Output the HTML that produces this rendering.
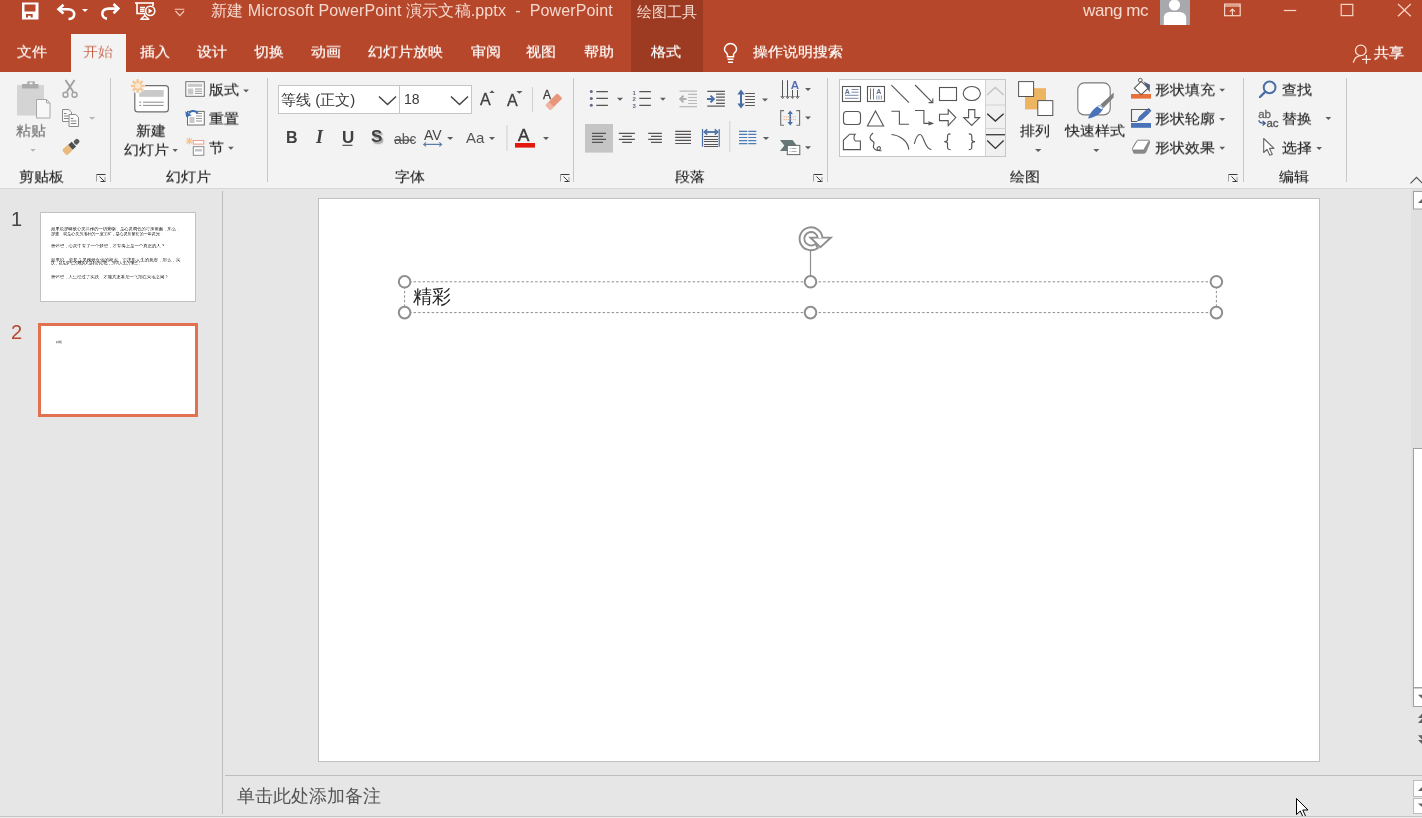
<!DOCTYPE html>
<html><head><meta charset="utf-8">
<style>
*{box-sizing:border-box;margin:0;padding:0}
html,body{width:1422px;height:818px;overflow:hidden;background:#E5E6E5;font-family:"Liberation Sans",sans-serif;}
.a{position:absolute;white-space:nowrap;will-change:transform}
#title{left:0;top:0;width:1422px;height:72px;background:#B7472A}
.wt{color:#FFFFFF;font-size:15px;line-height:15px;-webkit-text-stroke:0.2px #FFFFFF;transform:scaleY(0.92);transform-origin:50% 45%}
.tt{color:#F6D9CF;font-size:15px;line-height:15px}
#ribbon{left:0;top:72px;width:1422px;height:117px;background:#F3F3F3;border-bottom:1px solid #D6D6D6}
.rt{color:#262626;font-size:15px;line-height:15px;-webkit-text-stroke:0.15px #262626;transform:scaleY(0.92);transform-origin:50% 45%}
.gl{color:#262626;font-size:15px;line-height:15px;-webkit-text-stroke:0.15px #262626;transform:scaleY(0.92);transform-origin:50% 45%}
.sep{position:absolute;width:1px;background:#C8C8C8}
svg{position:absolute;overflow:visible}
</style></head><body>
<div id="title" class="a"></div>
<!-- contextual tab -->
<div class="a" style="left:631px;top:0;width:72px;height:72px;background:#9C3B22"></div>
<div class="a tt" style="left:637px;top:4px">绘图工具</div>
<div class="a tt" style="left:211px;top:3px;font-size:16px;line-height:16px;letter-spacing:0.13px">新建 Microsoft PowerPoint 演示文稿.pptx&nbsp; -&nbsp; PowerPoint</div>
<div class="a tt" style="left:1083px;top:2px;font-size:17px;line-height:17px;letter-spacing:-0.4px">wang mc</div>


<!-- QAT icons -->
<svg style="left:0;top:0" width="1422" height="72">
 <g fill="none" stroke="#FFFFFF">
  <!-- save -->
  <rect x="23" y="3.5" width="14.5" height="15" stroke-width="2"/>
 </g>
 <rect x="22" y="3" width="16" height="16" fill="#FFF"/>
 <rect x="24.5" y="4.5" width="11" height="7" fill="#B7472A"/>
 <path d="M26 14h6.7v3.4h-2v-1.6h-2.7v1.6h-2z" fill="#B7472A"/>
 <!-- undo -->
 <g fill="none" stroke="#FFFFFF" stroke-width="2.6" stroke-linejoin="miter" stroke-linecap="butt">
  <path d="M63.5 4.8 L58.5 9.3 L63.5 13.6"/>
  <path d="M58.5 9.3 H68 C72 9.3 74.2 11.6 74.2 14.3 C74.2 17 72 19 68.5 19"/>
  <path d="M113.5 4 L118.3 8.6 L113.5 13.2"/>
  <path d="M118.3 8.6 H108.8 C104.5 8.6 102.3 10.9 102.3 13.6 C102.3 16.4 104.3 18.4 107 18.6"/>
 </g>
 <path d="M82 9h6l-3 3z" fill="#FFF"/>
 <!-- present -->
 <g fill="none" stroke="#FFFFFF" stroke-width="1.6">
  <path d="M135 3H154"/>
  <path d="M137 3V13.5H145"/>
  <path d="M153 3V6"/>
  <path d="M140 7.5H145M140 9.5H144.5M140 11.3H144.5" stroke-width="1.3"/>
  <circle cx="150.2" cy="10.9" r="4.6"/>
 </g>
 <path d="M148.5 8.3v5.2l4-2.6z" fill="#FFF"/>
 <path d="M144.8 13.5V15.2M144.8 15.5L140.8 19.2H148.8Z" fill="none" stroke="#FFF" stroke-width="1.4" stroke-linejoin="round"/>
 <path d="M174.8 9.3h9.5M175.5 11l4.3 4.6l4.3-4.6" fill="none" stroke="#F4CDBE" stroke-width="1.1"/>
 <!-- right window buttons -->
 <g fill="none" stroke="#F9D5C6" stroke-width="1.2">
  <rect x="1224.6" y="4.1" width="15.6" height="11.6"/>
  <path d="M1224.6 6H1240.2"/>
  <path d="M1232.4 15.7V9.3M1229.8 11.6L1232.4 9L1235 11.6"/>
  <path d="M1283.8 10.5H1296.2"/>
  <rect x="1341.2" y="4.4" width="11.6" height="11.2"/>
  <path d="M1398 4L1410.8 16.2M1410.8 4L1398 16.2"/>
 </g>
 <!-- avatar -->
 <rect x="1160" y="0" width="30" height="25" fill="#A7A9AC"/>
 <circle cx="1174.5" cy="5" r="5.6" fill="#FFF"/>
 <path d="M1163.8 25V18C1163.8 14 1166.5 12 1170 12H1179C1182.8 12 1186.2 14 1186.2 18V25Z" fill="#FFF"/>
 <!-- lightbulb -->
 <g fill="none" stroke="#FFFFFF" stroke-width="1.5">
  <path d="M727.5 56.8V55C727.5 53 724.5 52 724.5 49.5A6 6 0 0 1 736.5 49.5C736.5 52 733.5 53 733.5 55V56.8Z"/>
  <path d="M727.5 59.3H733.5M728 62.2H733"/>
 </g>
 <!-- share -->
 <g fill="none" stroke="#FBE3D8" stroke-width="1.3">
  <circle cx="1360.8" cy="50.4" r="5.3"/>
  <path d="M1353.3 62.6C1354.3 58.8 1357 56 1360.8 55.7"/>
  <path d="M1366.4 55V63.8M1362 59.4H1370.8"/>
 </g>
</svg>

<!-- tabs -->
<div class="a" style="left:71px;top:34px;width:55px;height:40px;background:#F3F3F3"></div>
<div class="a wt" style="left:17px;top:44px">文件</div>
<div class="a wt" style="left:83px;top:44px;color:#B7472A">开始</div>
<div class="a wt" style="left:140px;top:44px">插入</div>
<div class="a wt" style="left:197px;top:44px">设计</div>
<div class="a wt" style="left:254px;top:44px">切换</div>
<div class="a wt" style="left:311px;top:44px">动画</div>
<div class="a wt" style="left:368px;top:44px">幻灯片放映</div>
<div class="a wt" style="left:471px;top:44px">审阅</div>
<div class="a wt" style="left:526px;top:44px">视图</div>
<div class="a wt" style="left:584px;top:44px">帮助</div>
<div class="a wt" style="left:651px;top:44px">格式</div>
<div class="a wt" style="left:753px;top:44px">操作说明搜索</div>
<div class="a wt" style="left:1374px;top:45px;font-size:15px;-webkit-text-stroke:0.25px #fff">共享</div>

<!-- ribbon -->
<div id="ribbon" class="a"></div>
<div class="sep" style="left:110px;top:78px;height:104px"></div>
<div class="sep" style="left:267px;top:78px;height:104px"></div>
<div class="sep" style="left:573px;top:78px;height:104px"></div>
<div class="sep" style="left:827px;top:78px;height:104px"></div>
<div class="sep" style="left:1243px;top:78px;height:104px"></div>
<div class="sep" style="left:1346px;top:78px;height:104px"></div>


<!-- clipboard group -->
<svg style="left:0;top:0" width="1422" height="188">
 <rect x="17" y="85" width="27" height="30.5" fill="#D4D4D4"/>
 <rect x="22" y="84" width="16.5" height="4.5" fill="#ABABAB"/>
 <rect x="27.3" y="81.3" width="7.5" height="3.5" fill="#ABABAB"/>
 <rect x="29.5" y="82.3" width="3" height="2" fill="#F3F3F3"/>
 <path d="M36.5 99.5H46.5L50 103V118H36.5Z" fill="#F7F7F7" stroke="#A8A8A8" stroke-width="1"/>
 <path d="M46.5 99.5V103H50" fill="none" stroke="#A8A8A8" stroke-width="1"/>
 <path d="M30.3 149h5.3l-2.65 2.8z" fill="#B5B5B5"/>
 <!-- scissors -->
 <g fill="none" stroke="#A0A0A0">
  <path d="M65.5 80L73.2 91.8M74.5 80L66.8 91.8" stroke-width="1.9"/>
  <circle cx="65.5" cy="94.8" r="2.5" stroke-width="1.4"/>
  <circle cx="74.5" cy="94.8" r="2.5" stroke-width="1.4"/>
 </g>
 <!-- copy -->
 <g fill="#F9F9F9" stroke="#8A8A8A" stroke-width="1">
  <path d="M62.5 109.5H68.8L71.5 112.2V121.5H62.5Z"/>
  <path d="M69 114.5H75.8L78.5 117.2V126.5H69Z"/>
 </g>
 <path d="M64 113.5h2.5M64 116h4.5M64 118.5h4.5M70.8 118.5h2.5M70.8 121h5.5M70.8 123.5h5.5" stroke="#777" stroke-width="0.9"/>
 <path d="M89 117h6.2l-3.1 2.8z" fill="#B5B5B5"/>
 <!-- format painter -->
 <g transform="translate(64.3,152.8) rotate(-42)">
  <rect x="0" y="-3.8" width="8.5" height="7.6" rx="2" fill="#EAB97C"/>
  <rect x="8.3" y="-3.3" width="4.6" height="6.6" fill="#4E4E4E"/>
  <rect x="13.8" y="-2.4" width="5.5" height="4.8" rx="1.8" fill="#5A5A5A"/>
 </g>
<g transform="translate(0,0)" fill="none" stroke-width="1"><path d="M96.5 174.5H105.5M100.5 181.5H105.5M99.5 176.5L104.5 181.5" stroke="#3A3A3A"/><path d="M96.5 174.5V181.5M105 177V181.5" stroke="#A0A0A0"/></g>

 <!-- new slide -->
 <rect x="134.8" y="85.7" width="33.6" height="26.2" rx="3" fill="#FFF" stroke="#6E6E6E" stroke-width="1.2"/>
 <rect x="139.2" y="90" width="24.5" height="6.8" fill="#C9C9C9"/>
 <path d="M139.2 102.2h2M143 102.2h20.7M139.2 105.4h2M143 105.4h20.7" stroke="#8C8C8C" stroke-width="1"/>
 <circle cx="137.7" cy="85.8" r="7.5" fill="#F3F3F3"/>
 <path d="M140.20 87.20L144.60 86.92L144.60 84.68L140.20 84.40ZM138.48 88.56L141.79 91.47L143.37 89.89L140.46 86.58ZM136.30 88.30L136.58 92.70L138.82 92.70L139.10 88.30ZM134.94 86.58L132.03 89.89L133.61 91.47L136.92 88.56ZM135.20 84.40L130.80 84.68L130.80 86.92L135.20 87.20ZM136.92 83.04L133.61 80.13L132.03 81.71L134.94 85.02ZM139.10 83.30L138.82 78.90L136.58 78.90L136.30 83.30ZM140.46 85.02L143.37 81.71L141.79 80.13L138.48 83.04Z" fill="#F4C796"/>
 <circle cx="137.7" cy="85.8" r="2.9" fill="#FCE7D0"/>
 <path d="M172.5 149h5.3l-2.65 3z" fill="#5E5E5E"/>
 <!-- layout -->
 <rect x="185.8" y="81.7" width="18.5" height="14.6" fill="#FFF" stroke="#6E6E6E" stroke-width="1"/>
 <rect x="187.8" y="83.7" width="14.5" height="3.2" fill="#C9C9C9"/>
 <rect x="187.8" y="88.5" width="5.5" height="6" fill="#C9C9C9"/>
 <path d="M195 89h7M195 91.2h7M195 93.4h7" stroke="#8A8A8A" stroke-width="0.9"/>
 <path d="M243.2 89.6h5.7l-2.85 2.8z" fill="#5E5E5E"/>
 <!-- reset -->
 <rect x="187.5" y="111.4" width="16.8" height="13.6" fill="#FFF" stroke="#6E6E6E" stroke-width="1"/>
 <rect x="189.5" y="117" width="5" height="6" fill="#C9C9C9"/>
 <path d="M196 113.5h6M196 116h6M196 118.5h6M196 121h6" stroke="#8A8A8A" stroke-width="0.9"/>
 <path d="M189 113.5C190 110.8 195.5 109.5 197.5 113.2" fill="none" stroke="#3E6DB5" stroke-width="2"/>
 <path d="M185.2 111.2L186.2 117.3L191.7 115.2Z" fill="#3E6DB5"/>
 <!-- section -->
 <g stroke="#F3C394" stroke-width="1.1">
  <path d="M189.4 137.4v7.2M185.8 141h7.2M186.8 138.4l5.2 5.2M192 138.4l-5.2 5.2"/>
 </g>
 <rect x="193.3" y="140.5" width="10.5" height="3.6" fill="#FFF" stroke="#E8A08A" stroke-width="1"/>
 <rect x="193.3" y="146.7" width="10.5" height="8.6" fill="#FFF" stroke="#8A8A8A" stroke-width="1"/>
 <rect x="195" y="149" width="7" height="2.5" fill="#C4C4C4"/>
 <path d="M228 146.7h5.8l-2.9 3z" fill="#5E5E5E"/>
 <!-- group launchers -->
<g transform="translate(464,0)" fill="none" stroke-width="1"><path d="M96.5 174.5H105.5M100.5 181.5H105.5M99.5 176.5L104.5 181.5" stroke="#3A3A3A"/><path d="M96.5 174.5V181.5M105 177V181.5" stroke="#A0A0A0"/></g>
<g transform="translate(717,0)" fill="none" stroke-width="1"><path d="M96.5 174.5H105.5M100.5 181.5H105.5M99.5 176.5L104.5 181.5" stroke="#3A3A3A"/><path d="M96.5 174.5V181.5M105 177V181.5" stroke="#A0A0A0"/></g>
<g transform="translate(1132,0)" fill="none" stroke-width="1"><path d="M96.5 174.5H105.5M100.5 181.5H105.5M99.5 176.5L104.5 181.5" stroke="#3A3A3A"/><path d="M96.5 174.5V181.5M105 177V181.5" stroke="#A0A0A0"/></g>

 <path d="M1410.5 183.3l6-6l6 6" fill="none" stroke="#555" stroke-width="1.2"/>
</svg>
<div class="a rt" style="left:16px;top:123px;color:#8A8A8A">粘贴</div>
<div class="a rt" style="left:136px;top:123px">新建</div>
<div class="a rt" style="left:124px;top:142px">幻灯片</div>
<div class="a rt" style="left:209px;top:82px">版式</div>
<div class="a rt" style="left:209px;top:111px">重置</div>
<div class="a rt" style="left:209px;top:140px">节</div>

<div class="a gl" style="left:19px;top:169px">剪贴板</div>
<div class="a gl" style="left:166px;top:169px">幻灯片</div>

<!-- font group -->
<div class="a" style="left:278px;top:85px;width:194px;height:29px;background:#FFF;border:1px solid #C6C6C6"></div>
<div class="a" style="left:399px;top:85px;width:1px;height:29px;background:#C6C6C6"></div>
<div class="a" style="left:281px;top:92px;font-size:15px;line-height:15px;color:#3A3A3A">等线 (正文)</div>
<div class="a" style="left:404px;top:92px;font-size:14px;line-height:14px;color:#3A3A3A">18</div>
<svg style="left:0;top:0" width="1422" height="188">
 <path d="M379 96.5l8.5 8l8.5-8M451 96.5l8.5 8l8.5-8" fill="none" stroke="#444" stroke-width="1.5"/>
 <path d="M489.3 93.1l2.7-2.8l2.7 2.8z" fill="#5A5A5A"/>
 <path d="M516.2 90.9h6.4l-3.2 2.8z" fill="#5A5A5A"/>
 <rect x="532" y="87" width="1" height="25" fill="#D0D0D0"/>
 <g transform="translate(553.8,101.8) rotate(-45)"><rect x="-8.5" y="-3.6" width="17" height="7.2" rx="1.2" fill="#E8957A"/><rect x="-8.5" y="-3.6" width="5" height="7.2" rx="1.2" fill="#F0B5A2"/></g>
 
 <rect x="506.5" y="125" width="1" height="26" fill="#D0D0D0"/>
 <rect x="515" y="143" width="20" height="4.6" fill="#E2180F"/>
 <path d="M424 144.4h17.3" stroke="#5B7BA8" stroke-width="1.2"/>
 <path d="M426 142.4l-2.3 2l2.3 2M439.3 142.4l2.3 2l-2.3 2" fill="none" stroke="#5B7BA8" stroke-width="1.1"/>
 <path d="M447.1 137h6.1l-3.05 3z M489 137h6l-3 3z M543 137h6l-3 3z" fill="#5E5E5E"/>
 <path d="M394 140.2h20.3" stroke="#444" stroke-width="1.2"/>
 <path d="M342.5 145.3h10" stroke="#444" stroke-width="1.1"/>
</svg>
<div class="a" style="left:480px;top:92px;font-size:16px;line-height:16px;color:#404040;-webkit-text-stroke:0.3px #404040">A</div>
<div class="a" style="left:507px;top:93px;font-size:16px;line-height:16px;color:#404040;-webkit-text-stroke:0.3px #404040">A</div>
<div class="a" style="left:543px;top:89px;font-size:12px;line-height:12px;color:#3A3A3A;-webkit-text-stroke:0.3px #3A3A3A">A</div>
<div class="a" style="left:286px;top:130px;font-size:16px;line-height:16px;font-weight:bold;color:#404040">B</div>
<div class="a" style="left:316px;top:129px;font-size:18px;line-height:17px;font-weight:bold;font-style:italic;font-family:'Liberation Serif',serif;color:#404040">I</div>
<div class="a" style="left:342px;top:129px;font-size:17px;line-height:17px;font-weight:bold;color:#404040">U</div>
<div class="a" style="left:371px;top:128px;font-size:17px;line-height:17px;font-weight:bold;color:#404040;text-shadow:1.5px 1.5px 1.5px #999">S</div>
<div class="a" style="left:394px;top:132px;font-size:14px;line-height:14px;color:#555">abc</div>
<div class="a" style="left:424px;top:128px;font-size:14px;line-height:14px;color:#444">AV</div>
<div class="a" style="left:466px;top:130px;font-size:15px;line-height:15px;color:#555">Aa</div>
<div class="a" style="left:518px;top:127px;font-size:17px;line-height:17px;color:#3A3A3A;-webkit-text-stroke:0.5px #3A3A3A">A</div>

<div class="a gl" style="left:395px;top:169px">字体</div>

<!-- paragraph group -->
<svg style="left:0;top:0" width="1422" height="188">
 <g fill="#5F6B85"><circle cx="591.3" cy="91.6" r="1.5"/><circle cx="591.3" cy="98.4" r="1.5"/><circle cx="591.3" cy="105.3" r="1.5"/></g>
 <path d="M596.3 91.6h11.6M596.3 98.4h11.6M596.3 105.3h11.6M639.3 91.6h11.6M639.3 98.4h11.6M639.3 105.3h11.6" stroke="#555" stroke-width="1.3"/>
 <text x="632.5" y="94.5" font-size="6" font-family="Liberation Sans" font-weight="bold" fill="#5F6B85">1</text>
 <text x="632.5" y="101.3" font-size="6" font-family="Liberation Sans" font-weight="bold" fill="#5F6B85">2</text>
 <text x="632.5" y="108.2" font-size="6" font-family="Liberation Sans" font-weight="bold" fill="#5F6B85">3</text>
 <path d="M616.9 97.8h6.2l-3.1 3z M660 97.8h5.8l-2.9 3z M762 98.4h6l-3 3z M805 88h6l-3 3z M805 116.6h6l-3 3z M805 146.2h6l-3 3z M762.9 137.1h6.2l-3.1 3z" fill="#5E5E5E"/>
 <!-- decrease indent -->
 <path d="M679.5 91.2h17.5M679.5 106.6h17.5M688.2 94.4h8.8M688.2 97.5h8.8M688.2 100.5h8.8M688.2 103.5h8.8" stroke="#B9B9B9" stroke-width="1.2"/>
 <path d="M680 99h6.5M683.5 95.8l-3.3 3.2l3.3 3.2" fill="none" stroke="#B0B0B0" stroke-width="2"/>
 <!-- increase indent -->
 <path d="M707.3 91.4h17.6M707.3 106.2h17.6M716.1 94.2h8.8M716.1 97.2h8.8M716.1 100.2h8.8M716.1 103.4h8.8" stroke="#5A5A5A" stroke-width="1.2"/>
 <path d="M707 98.9h6M710.5 95.6l3.3 3.3l-3.3 3.3" fill="none" stroke="#4A6FA5" stroke-width="2"/>
 <!-- line spacing -->
 <path d="M741 92v13.5" stroke="#4A6FA5" stroke-width="2"/>
 <path d="M737.3 94.5l3.7-5l3.7 5zM737.3 103.5l3.7 5l3.7-5z" fill="#4A6FA5"/>
 <path d="M745.2 93.5h9.7M745.2 96.5h9.7M745.2 99.5h9.7M745.2 102.5h9.7M745.2 105.5h9.7" stroke="#5E5852" stroke-width="1"/>
 <!-- text direction -->
 <path d="M782.5 80.2v17M787.5 80.2v17M792.5 90v7.2M797.5 90v7.2" stroke="#555" stroke-width="1"/>
 <path d="M780.8 96l1.8 2.5l1.8-2.5M785.8 96l1.8 2.5l1.8-2.5M790.7 96l1.8 2.5l1.8-2.5M795.7 96l1.8 2.5l1.8-2.5" fill="none" stroke="#555" stroke-width="1"/>
 <text x="790.8" y="88.6" font-size="11.5" font-family="Liberation Sans" font-weight="bold" fill="#5470B5">A</text>
 <!-- align text -->
 <path d="M784 110.6h-3.3v14.6h3.3M796.3 110.6h3.3v14.6h-3.3" fill="none" stroke="#707070" stroke-width="1.1"/>
 <path d="M790.2 112v12" stroke="#4A6FA5" stroke-width="1.6"/>
 <path d="M787.5 114l2.7-3.4l2.7 3.4zM787.5 122l2.7 3.6l2.7-3.6z" fill="#4A6FA5"/>
 <path d="M783.5 116.8h12.5M783.5 119.6h12.5" stroke="#E7A77C" stroke-width="0.8" stroke-dasharray="1.5 0.8"/>
 <!-- smartart -->
 <path d="M780 140h12.5l4.3 5.4l-4.3 5.5H780l4.3-5.5z" fill="#667777"/>
 <rect x="787.3" y="145.4" width="12.5" height="9.2" fill="#FFF" stroke="#666" stroke-width="1"/>
 <path d="M789.5 148.5h1M791.5 148.5h5M789.5 151.5h1M791.5 151.5h5" stroke="#888" stroke-width="0.7"/>
 <!-- align row -->
 <rect x="585" y="124" width="28" height="28.6" fill="#C5C5C5"/>
 <path d="M592 133.4h14M592 136.4h11M592 139.4h14M592 142.4h11" stroke="#555" stroke-width="1.2"/>
 <path d="M618.8 133.4h16.1M622.2 136.4h9.7M618.8 139.4h16.1M622.2 142.4h9.7" stroke="#555" stroke-width="1.2"/>
 <path d="M648.2 133.4h13.7M651 136.4h10.9M648.2 139.4h13.7M651 142.4h10.9" stroke="#555" stroke-width="1.2"/>
 <path d="M675.2 131.3h15.8M675.2 134.4h15.8M675.2 137.4h15.8M675.2 140.4h15.8M675.2 143.5h15.8" stroke="#555" stroke-width="1.2"/>
 <!-- distributed -->
 <path d="M702.5 129v17.7M719.2 129v17.7" stroke="#4A6FA5" stroke-width="1.2"/>
 <path d="M705.5 132h11" stroke="#4A6FA5" stroke-width="1.8"/>
 <path d="M707.3 129.3l-3 2.7l3 2.7M714.7 129.3l3 2.7l-3 2.7" fill="none" stroke="#4A6FA5" stroke-width="1.6"/>
 <path d="M704 136.5h14M704 139h14M704 141.5h14M704 144h14M704 146.5h14" stroke="#555" stroke-width="1" shape-rendering="crispEdges"/>
 <rect x="729.3" y="121" width="1" height="31" fill="#D0D0D0"/>
 <!-- columns -->
 <path d="M739 131.3h8.3M739 134.4h8.3M739 137.5h8.3M739 140.6h8.3M739 143.6h8.3M748.3 131.3h8M748.3 134.4h8M748.3 137.5h8M748.3 140.6h8M748.3 143.6h8" stroke="#4E7DB5" stroke-width="1.2"/>
</svg>

<div class="a gl" style="left:675px;top:169px">段落</div>

<!-- drawing group -->
<div class="a" style="left:839px;top:79px;width:167px;height:78px;background:#FFF;border:1px solid #C6C6C6"></div>
<div class="a" style="left:985px;top:80px;width:20px;height:76px;background:#F0F0F0;border-left:1px solid #D2D2D2"></div>
<svg style="left:0;top:0" width="1422" height="188">
 <path d="M985.5 105h20M985.5 128.5h20" stroke="#D2D2D2" stroke-width="1"/>
 <path d="M987 95l8.3-7.6l8.3 7.6" fill="none" stroke="#C2C2C2" stroke-width="1.3"/>
 <path d="M987.2 113.8l8.2 7.3l8.2-7.3" fill="none" stroke="#333" stroke-width="1.4"/>
 <path d="M986 134.7h19" stroke="#444" stroke-width="1.4"/>
 <path d="M987.2 140.6l8.2 7.8l8.2-7.8" fill="none" stroke="#333" stroke-width="1.4"/>
 <g fill="none" stroke="#555" stroke-width="1.1">
  <!-- row1 -->
  <rect x="842.5" y="86.5" width="18" height="15"/>
  <path d="M851.5 89.5h7M851.5 92.2h7M845 95.3h13.5M845 98.3h13.5" stroke="#7A8AA8" stroke-width="1"/>
  <rect x="867.5" y="86.5" width="17" height="15"/>
  <path d="M870.5 88.5v11M873.5 88.5v11" stroke="#777" stroke-width="1"/>
  <path d="M876.8 95.5v4M879 95.5v4M881.3 95.5v4" stroke="#7A8AA8" stroke-width="0.9"/>
  <path d="M891.4 85.2L908.9 102.7"/>
  <path d="M915.1 85L932.5 102.6"/>
  <rect x="939.5" y="87.5" width="17" height="13"/>
  <ellipse cx="971.8" cy="93.5" rx="8.6" ry="7"/>
  <!-- row2 -->
  <rect x="843.5" y="111.5" width="17" height="13" rx="3"/>
  <path d="M875.5 111L883.6 126H867.4Z"/>
  <path d="M891.4 111.2H899.4V124.3H908.9"/>
  <path d="M915 110.5H923.9V123.4H932.5"/>
  <path d="M939.5 114.2H948.2V109.6L955.8 117.6L948.2 125.6V120.6H939.5Z"/>
  <path d="M968.6 109.6H974.8V117.6H979.6L971.7 125.4L963.7 117.6H968.6Z"/>
  <!-- row3 -->
  <path d="M843.4 149.6V140.3L849.6 134.2H855.2C853.5 136 853.5 140 855.5 141H860.4V149.6Z"/>
  <path d="M873 133C869 136.5 869 139 872.5 141C876 143 872.5 145 873.5 147.5C874.5 150 878.5 151.5 880 149.5C881.5 147.5 879 145.5 877.5 147.5C876 149.5 879 151.5 881.5 150.5"/>
  <path d="M891.4 134.5C899 135 908.5 141 908.7 149.8"/>
  <path d="M914.3 143.8C915.5 139 917 134.5 920 134.5C924 134.5 924.5 149.5 931.5 149.5"/>
 </g>
 <path d="M928.6 102.6h4.2v-4.2M928.3 124.9l4.2-1.5l-4.2-1.7" fill="none" stroke="#555" stroke-width="1.1"/>
 <text x="844.8" y="94.3" font-size="7" font-family="Liberation Sans" font-weight="bold" fill="#5F6F90">A</text>
 <text x="876.3" y="94.3" font-size="7" font-family="Liberation Sans" font-weight="bold" fill="#5F6F90">A</text>
 
 <path d="M950.5 133.8C947.5 133.8 947.5 135 947.5 137.5V139.8C947.5 141 946.5 141.6 944.3 141.7C946.5 141.8 947.5 142.4 947.5 143.6V146C947.5 148.5 947.5 149.6 950.5 149.6M968.8 133.8C971.8 133.8 971.8 135 971.8 137.5V139.8C971.8 141 972.8 141.6 975 141.7C972.8 141.8 971.8 142.4 971.8 143.6V146C971.8 148.5 971.8 149.6 968.8 149.6" fill="none" stroke="#555" stroke-width="1.2"/>
 <!-- arrange -->
 <rect x="1025" y="88.2" width="21" height="21.2" fill="#EDB462"/>
 <rect x="1018.6" y="81.6" width="15" height="14.9" fill="#FFF" stroke="#555" stroke-width="1"/>
 <rect x="1037.8" y="100.6" width="15" height="14.9" fill="#FFF" stroke="#555" stroke-width="1"/>
 <path d="M1035 149.1h6.4l-3.2 3z M1093.2 149.1h6.2l-3.1 3z" fill="#5E5E5E"/>
 <!-- quick styles -->
 <rect x="1077.8" y="82.9" width="32.4" height="32" rx="6.5" fill="#FFF" stroke="#7A7A7A" stroke-width="1.1"/>
 <path d="M1100.5 104.5L1113.8 92.5L1113.5 97.5L1103.5 108Z" fill="#7E7E7E"/>
 <path d="M1088 118.5C1090 113 1093.5 108.5 1097.5 106.5L1102.5 109.8C1100.5 114 1095 117.5 1088 118.5Z" fill="#4A72B8"/>
 <path d="M1097.5 106.5C1100 104.5 1103 106.5 1102.5 109.8" fill="#FFF" stroke="#4A72B8" stroke-width="0.8"/>
 <!-- shape fill -->
 <rect x="1131" y="94" width="20" height="4.6" fill="#E8703A"/>
 <path d="M1134.4 88.2L1141.2 81.4L1148.2 88.2L1141.2 94.6Z" fill="#FFF" stroke="#555" stroke-width="1.1"/>
 <circle cx="1140.3" cy="80.2" r="1.9" fill="none" stroke="#555" stroke-width="0.9"/>
 <path d="M1143.5 81.5L1150 84.8L1149.6 92.2L1146.8 87.6Z" fill="#4E5E80"/>
 <!-- shape outline -->
 <rect x="1131" y="123" width="20" height="4.8" fill="#4A72B8"/>
 <path d="M1148 109.5H1131.5V121.5H1137" fill="none" stroke="#5A5A5A" stroke-width="1.1"/>
 <g transform="translate(1137.6,121) rotate(-43)">
  <path d="M0 0L4 -2H14.5V2H4Z" fill="#4A72B8" stroke="#3A5C98" stroke-width="0.6"/>
  <rect x="15" y="-2" width="2" height="4" fill="#3A5C98"/>
 </g>
 <!-- shape effects -->
 <path d="M1132.5 148.5C1132.5 147 1136 140.5 1138 140H1148C1149.5 140 1150.3 141.5 1150 143L1147 150.5C1146.5 152.5 1145 153.8 1143.5 153.8H1135C1133 153.8 1132.3 151 1132.5 148.5Z" fill="#8A8A8A"/>
 <path d="M1132.5 148.5L1137.5 140.2H1148.8C1149.3 140.2 1149.3 140.6 1149 141L1144 149.5C1143.8 149.9 1143.4 150 1143 150H1133.2C1132.5 150 1132.3 149.2 1132.5 148.5Z" fill="#FFF" stroke="#7A7A7A" stroke-width="0.8"/>
 <path d="M1219.3 88.8h5.8l-2.9 3z M1219.3 118h5.8l-2.9 3z M1219.3 146.8h5.8l-2.9 3z" fill="#5E5E5E"/>
 <!-- editing -->
 <circle cx="1269.6" cy="87.4" r="5.9" fill="none" stroke="#4A6FA5" stroke-width="2"/>
 <path d="M1265.2 91.8L1260 97" stroke="#4A6FA5" stroke-width="2.4" stroke-linecap="round"/>
 <text x="1258.3" y="117.8" font-size="11.5" font-family="Liberation Sans" fill="#6A6A6A" stroke="#6A6A6A" stroke-width="0.35" letter-spacing="-0.2">ab</text>
 <text x="1266.5" y="126.8" font-size="11.5" font-family="Liberation Sans" fill="#5A5A5A" stroke="#5A5A5A" stroke-width="0.35" letter-spacing="-0.2">ac</text>
 <path d="M1258.8 120.3C1259.5 122.5 1260.5 123.2 1265.2 123.2M1262.6 121L1265.3 123.2L1262.6 125.4" fill="none" stroke="#3F5F95" stroke-width="1.3"/>
 <path d="M1325.5 116.9h5.7l-2.85 3z M1316.3 146.9h5.7l-2.85 3z" fill="#5E5E5E"/>
 <path d="M1263.7 138.5V152.5L1267 149.3L1269.8 155.3L1272.3 154.2L1269.5 148.4H1274Z" fill="#FFF" stroke="#666" stroke-width="1.1" stroke-linejoin="round"/>
</svg>
<div class="a rt" style="left:1020px;top:123px">排列</div>
<div class="a rt" style="left:1065px;top:123px">快速样式</div>
<div class="a rt" style="left:1155px;top:82px">形状填充</div>
<div class="a rt" style="left:1155px;top:111px">形状轮廓</div>
<div class="a rt" style="left:1155px;top:140px">形状效果</div>
<div class="a rt" style="left:1282px;top:82px">查找</div>
<div class="a rt" style="left:1282px;top:111px">替换</div>
<div class="a rt" style="left:1282px;top:140px">选择</div>

<div class="a gl" style="left:1010px;top:169px">绘图</div>
<div class="a gl" style="left:1279px;top:169px">编辑</div>

<!-- slide panel -->
<div class="a" style="left:222px;top:191px;width:1px;height:623px;background:#BDBDBD"></div>
<div class="a" style="left:11px;top:209px;font-size:20px;line-height:20px;color:#444">1</div>
<div class="a" style="left:40px;top:212px;width:156px;height:90px;background:#fff;border:1px solid #C2C2C2"></div>

<div class="a" style="left:50.7px;top:227.0px;font-size:9px;line-height:9px;color:#2A2A2A;transform-origin:0 0;transform:scale(0.4789,0.45)">如果说那辆被心灵共作的一切景物，是心灵调色的每抹画面，那么，</div>
<div class="a" style="left:50.7px;top:231.6px;font-size:9px;line-height:9px;color:#2A2A2A;transform-origin:0 0;transform:scale(0.4480,0.45)">那些，就是心灵所播种的一座宝矿，是心灵所繁衍的一串灵光；</div>
<div class="a" style="left:50.7px;top:244.0px;font-size:9px;line-height:9px;color:#2A2A2A;transform-origin:0 0;transform:scale(0.4876,0.45)">曾怀想，心灵中有了一个梦想，才有得上是一个真正的人？</div>
<div class="a" style="left:50.7px;top:257.5px;font-size:9px;line-height:9px;color:#2A2A2A;transform-origin:0 0;transform:scale(0.4954,0.45)">如果说，梦想是灵魂最永远的家乡，而我那人生的意志，那么，实</div>
<div class="a" style="left:50.7px;top:261.0px;font-size:9px;line-height:9px;color:#2A2A2A;transform-origin:0 0;transform:scale(0.4194,0.45)">践，就是梦想的翅膀又是我的心愿，所谓人生的理想；</div>
<div class="a" style="left:50.7px;top:274.5px;font-size:9px;line-height:9px;color:#2A2A2A;transform-origin:0 0;transform:scale(0.4840,0.45)">曾怀想，人生经过了实践，才能真正看见一飞翔在天地之间？</div>
<div class="a" style="left:11px;top:322px;font-size:20px;line-height:20px;color:#B5482D">2</div>
<div class="a" style="left:38px;top:323px;width:160px;height:94px;background:#fff;border:3px solid #E2714F"></div>
<div class="a" style="left:56px;top:340px;font-size:3.3px;line-height:4px;color:#222">精彩</div>

<!-- canvas -->
<div class="a" style="left:318px;top:198px;width:1002px;height:564px;background:#fff;border:1px solid #C2C2C2"></div>
<div class="a" style="left:413px;top:288px;font-size:18.5px;line-height:18.5px;color:#222">精彩</div>
<svg style="left:0;top:0" width="1422" height="818">
 <g fill="none" stroke="#8E8E8E" stroke-width="1" stroke-dasharray="2.5 2">
  <path d="M404.6 281.8H1216.4M404.6 312.6H1216.4M404.6 281.8V312.6M1216.4 281.8V312.6"/>
 </g>
 <path d="M810.5 250.5V275" stroke="#8E8E8E" stroke-width="1.2"/>
 <g fill="#FFF" stroke="#8E8E8E" stroke-width="2">
  <circle cx="404.6" cy="281.8" r="5.8"/>
  <circle cx="810.5" cy="281.8" r="5.8"/>
  <circle cx="1216.4" cy="281.8" r="5.8"/>
  <circle cx="404.6" cy="312.6" r="5.8"/>
  <circle cx="810.5" cy="312.6" r="5.8"/>
  <circle cx="1216.4" cy="312.6" r="5.8"/>
 </g>
 <!-- rotate handle -->
 <g stroke="#8E8E8E" stroke-width="3.8" stroke-linejoin="miter" fill="#8E8E8E">
  <path d="M821.5 237.9A10.5 10.5 0 1 0 816.6 247.7L815.1 245.3A7.7 7.7 0 1 1 818.7 238.1Z"/>
  <path d="M812.8 238.6H828.4L820.4 246Z"/>
 </g>
 <g fill="#FFF">
  <path d="M821.5 237.9A10.5 10.5 0 1 0 816.6 247.7L815.1 245.3A7.7 7.7 0 1 1 818.7 238.1Z"/>
  <path d="M812.8 238.6H828.4L820.4 246Z"/>
 </g>
 <!-- scrollbar -->
 <rect x="1411" y="189" width="11" height="518" fill="#E0E0E0"/>
 <rect x="1413.5" y="191.5" width="9" height="17.5" fill="#FFF" stroke="#A0A0A0" stroke-width="1"/>
 <path d="M1418 203L1422 199V203Z" fill="#606060"/>
 <rect x="1413.5" y="448.5" width="9" height="239" fill="#FFF" stroke="#A0A0A0" stroke-width="1"/>
 <rect x="1413.5" y="688" width="9" height="18.5" fill="#FFF" stroke="#A0A0A0" stroke-width="1"/>
 <path d="M1418 694.7H1422V698.6Z" fill="#606060"/>
 <path d="M1418 718L1422 713.8V718ZM1418 723L1422 718.8V723Z" fill="#606060"/>
 <path d="M1418 735.3H1422V739.5ZM1418 740H1422V744.1Z" fill="#606060"/>
 <!-- notes scroll -->
 <rect x="1413.5" y="780.5" width="9" height="16" fill="#FFF" stroke="#BDBDBD" stroke-width="1"/>
 <rect x="1413.5" y="798.5" width="9" height="15" fill="#FFF" stroke="#BDBDBD" stroke-width="1"/>
 <path d="M1418 791L1422 787V791Z" fill="#606060"/>
 <path d="M1418 803.5H1422V807Z" fill="#606060"/>
 <!-- cursor -->
 <path d="M1296.5 798.5V814.5L1300.3 811L1303.2 817.5L1305.6 816.4L1302.8 810H1308Z" fill="#FFF" stroke="#000" stroke-width="1"/>
</svg>

<!-- notes -->
<div class="a" style="left:225px;top:775px;width:1197px;height:1px;background:#BDBDBD"></div>
<div class="a" style="left:237px;top:787px;font-size:18.3px;line-height:18.3px;color:#555">单击此处添加备注</div>
<div class="a" style="left:0;top:816px;width:1422px;height:1px;background:#C4C4C4"></div><div class="a" style="left:0;top:817px;width:1422px;height:1px;background:#EDEDED"></div>
</body></html>
